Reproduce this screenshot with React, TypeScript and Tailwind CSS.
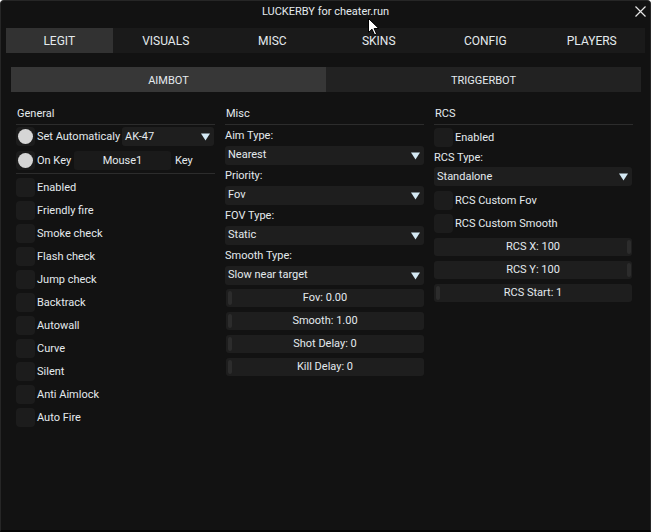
import React from "react"

const tabs = ["LEGIT", "VISUALS", "MISC", "SKINS", "CONFIG", "PLAYERS"]

const checks = [
  "Enabled",
  "Friendly fire",
  "Smoke check",
  "Flash check",
  "Jump check",
  "Backtrack",
  "Autowall",
  "Curve",
  "Silent",
  "Anti Aimlock",
  "Auto Fire",
]

function Arrow() {
  return (
    <svg width="9" height="8" viewBox="0 0 9 8" className="shrink-0">
      <path d="M0 0.5 H9 L4.5 7.5 Z" fill="#d4e9f4" />
    </svg>
  )
}

function Combo({ value, className = "" }: { value: string; className?: string }) {
  return (
    <div className={`flex h-[19px] items-center justify-between rounded-[3px] bg-[#1e1e1e] pl-[3px] pr-[4px] ${className}`}>
      <span>{value}</span>
      <Arrow />
    </div>
  )
}

function Box({ radio = false }: { radio?: boolean }) {
  return (
    <div className="flex h-[19px] w-[19px] shrink-0 items-center justify-center rounded-[4px] bg-[#1c1c1c]">
      {radio && <div className="h-[15px] w-[15px] rounded-full bg-[#d6d6d6]" />}
    </div>
  )
}

function Check({ label }: { label: string }) {
  return (
    <div className="flex h-[19px] items-center gap-[2px]">
      <Box />
      <span className="pt-[1px]">{label}</span>
    </div>
  )
}

function Slider({ label, grab }: { label: string; grab: "left" | "right" }) {
  return (
    <div className="relative flex h-[18px] items-center justify-center rounded-[3px] bg-[#1e1e1e]">
      <div
        className={`absolute top-[2px] h-[14px] w-[4px] rounded-[2px] bg-[#2c2c2c] ${grab === "left" ? "left-[2px]" : "right-[1px]"}`}
      />
      <span className="relative pt-[1px]">{label}</span>
    </div>
  )
}

function Header({ title }: { title: string }) {
  return <div className="flex h-[20px] items-center border-b border-[#2c2c2c] pl-[1px]">{title}</div>
}

function Label({ text }: { text: string }) {
  return <div className="flex h-[21px] items-center pt-[1px]">{text}</div>
}

export default function App() {
  return (
    <div
      className="relative h-[532px] w-[651px] overflow-hidden rounded-t-[4px] border border-b-2 border-[#262626] border-b-[#050505] bg-[#121212] text-[11px] text-[#e4eaee]"
      style={{ fontFamily: "Roboto, 'Noto Sans', sans-serif" }}
    >
      {/* title */}
      <div className="relative flex h-[21px] items-center justify-center">
        <span className="pt-[2px]">LUCKERBY for cheater.run</span>
        <svg width="11" height="11" viewBox="0 0 11 11" className="absolute right-[4px] top-[5px]">
          <path d="M0.5 0.5 L10.5 10.5 M10.5 0.5 L0.5 10.5" stroke="#e6e6e6" strokeWidth="1.2" />
        </svg>
      </div>

      {/* main tabs */}
      <div className="mx-[5px] mt-[6px] grid h-[25px] grid-cols-6 bg-[#1a1a1a] text-[12px]">
        {tabs.map((t, i) => (
          <div key={t} className={`flex items-center justify-center ${i === 0 ? "bg-[#323232]" : ""}`}>
            {t}
          </div>
        ))}
      </div>

      {/* sub tabs */}
      <div className="ml-[10px] mr-[9px] mt-[14px] grid h-[25px] grid-cols-2">
        <div className="flex items-center justify-center bg-[#373737] pt-[4px]">AIMBOT</div>
        <div className="flex items-center justify-center bg-[#222222] pt-[4px]">TRIGGERBOT</div>
      </div>

      {/* columns */}
      <div className="ml-[15px] mt-[13px] flex gap-[10px]">
        {/* general */}
        <div className="flex w-[199px] flex-col">
          <Header title="General" />
          <div className="mt-[2px] flex h-[19px] items-center">
            <Box radio />
            <span className="ml-[2px] w-[85px] pt-[1px]">Set Automaticaly</span>
            <Combo value="AK-47" className="w-[92px] pt-[1px]" />
          </div>
          <div className="mt-[5px] flex h-[19px] items-center">
            <Box radio />
            <span className="ml-[2px] w-[37px] pt-[1px]">On Key</span>
            <div className="flex h-[19px] w-[97px] items-center justify-center rounded-[3px] bg-[#1a1a1a] pt-[1px]">Mouse1</div>
            <span className="ml-[4px] pt-[1px]">Key</span>
          </div>
          <div className="mt-[3px] h-px bg-[#2c2c2c]" />
          <div className="mt-[4px] flex flex-col gap-[4px]">
            {checks.map((c) => (
              <Check key={c} label={c} />
            ))}
          </div>
        </div>

        {/* misc */}
        <div className="flex w-[199px] flex-col">
          <Header title="Misc" />
          <Label text="Aim Type:" />
          <Combo value="Nearest" />
          <Label text="Priority:" />
          <Combo value="Fov" />
          <Label text="FOV Type:" />
          <Combo value="Static" />
          <Label text="Smooth Type:" />
          <Combo value="Slow near target" />
          <div className="ml-[1px] mt-[4px] flex flex-col gap-[5px]">
            <Slider label="Fov: 0.00" grab="left" />
            <Slider label="Smooth: 1.00" grab="left" />
            <Slider label="Shot Delay: 0" grab="left" />
            <Slider label="Kill Delay: 0" grab="left" />
          </div>
        </div>

        {/* rcs */}
        <div className="flex w-[199px] flex-col">
          <Header title="RCS" />
          <div className="mt-[3px]">
            <Check label="Enabled" />
          </div>
          <div className="flex h-[20px] items-center pt-[2px]">RCS Type:</div>
          <Combo value="Standalone" className="mr-[1px] pt-[1px]" />
          <div className="mt-[5px] flex flex-col gap-[4px]">
            <Check label="RCS Custom Fov" />
            <Check label="RCS Custom Smooth" />
          </div>
          <div className="mr-[1px] mt-[5px] flex flex-col gap-[5px]">
            <Slider label="RCS X: 100" grab="right" />
            <Slider label="RCS Y: 100" grab="right" />
            <Slider label="RCS Start: 1" grab="left" />
          </div>
        </div>
      </div>

      {/* mouse pointer */}
      <svg width="12" height="18" viewBox="0 0 12 18" className="absolute left-[367px] top-[17px]">
        <path d="M0.5 0.5 V14.5 L4 11.2 L6.6 17 L8.6 16.1 L6.1 10.5 L10.8 10.5 Z" fill="#ffffff" stroke="#000000" strokeWidth="1" />
      </svg>
    </div>
  )
}
